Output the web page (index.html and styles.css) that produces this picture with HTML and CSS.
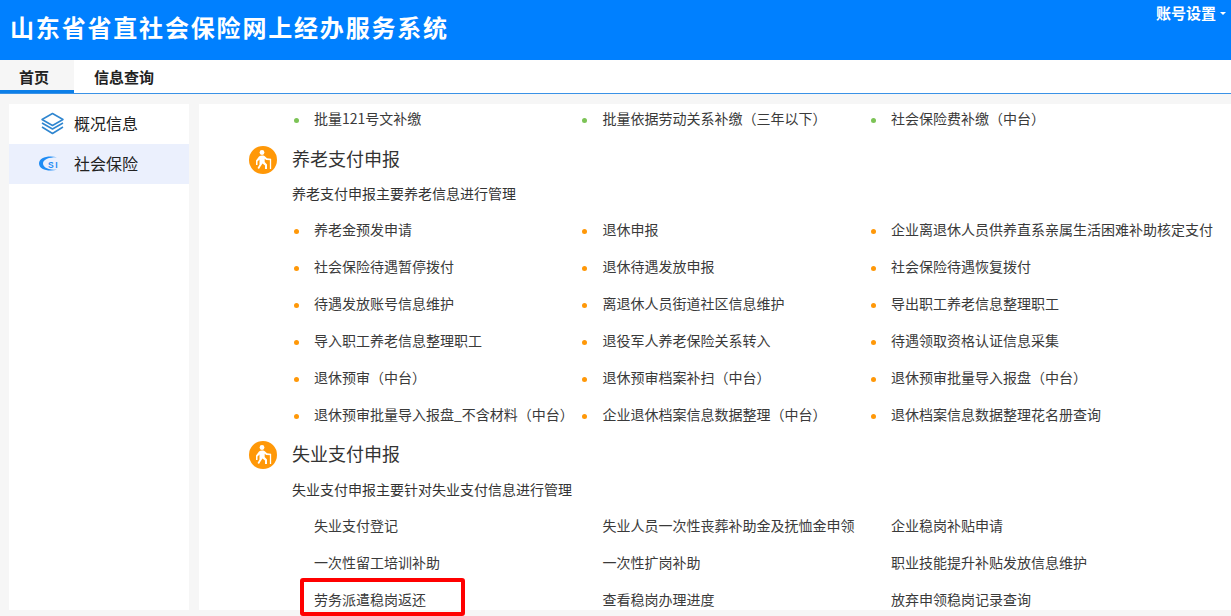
FILE: index.html
```html
<!DOCTYPE html>
<html lang="zh-CN">
<head>
<meta charset="utf-8">
<title>山东省省直社会保险网上经办服务系统</title>
<link rel="stylesheet" href="styles.css">
</head>
<body>
<header class="topbar">
  <h1 class="title">山东省省直社会保险网上经办服务系统</h1>
  <div class="account">账号设置<span class="caret"></span></div>
</header>
<nav class="tabs">
  <a class="tab tab-active">首页</a>
  <a class="tab">信息查询</a>
</nav>
<div class="layout">
  <aside class="sidebar">
    <div class="side-item">
      <svg class="side-icon" width="26" height="24" viewBox="0 0 26 24" fill="none" stroke="#2f86d0" stroke-width="1.5" stroke-linejoin="round">
        <path d="M13.500 1.500 24 7.500 13.500 13.500 3 7.500Z"/>
        <path d="M3 11 13.500 17 24 11"/>
        <path d="M3 15 13.500 21.500 24 15"/>
      </svg>
      <span class="side-label">概况信息</span>
    </div>
    <div class="side-item side-active">
      <svg class="side-icon" width="26" height="24" viewBox="0 0 26 24">
        <path d="M18 5.200C9 3 0 5.500 0 11.500S9 20 18 17.800C11 18 4 16 4 11.500S11 5 18 5.200Z" fill="#1e8cf5"/>
        <text class="si-text" x="9" y="16">SI</text>
      </svg>
      <span class="side-label">社会保险</span>
    </div>
  </aside>
  <main class="content">
    <ul class="links links-green">
      <li>批量121号文补缴</li>
      <li>批量依据劳动关系补缴（三年以下）</li>
      <li>社会保险费补缴（中台）</li>
    </ul>
    <section class="group">
      <div class="group-head">
        <svg class="group-icon" width="28" height="28" viewBox="0 0 28 28">
          <circle cx="14" cy="14" r="14" fill="#ff9808"/>
          <circle cx="13" cy="6.500" r="2.400" fill="#fff"/>
          <path d="M10 10.500C11.500 9.300 14 9.300 15.500 10L18 12.300 22 12.800V14.300L17.200 14 15.700 12.800V16L18 18.500V23H16V19.500L13.500 17.500 11.500 20.500 10 23 8.500 22 10.500 18.500V13.500L8.500 15.500V19H7V14.500Z" fill="#fff"/>
          <path d="M21.500 13v10" stroke="#fff" stroke-width="1.300" fill="none"/>
        </svg>
        <h2>养老支付申报</h2>
      </div>
      <p class="group-desc">养老支付申报主要养老信息进行管理</p>
      <ul class="links links-orange">
        <li>养老金预发申请</li>
        <li>退休申报</li>
        <li>企业离退休人员供养直系亲属生活困难补助核定支付</li>
        <li>社会保险待遇暂停拨付</li>
        <li>退休待遇发放申报</li>
        <li>社会保险待遇恢复拨付</li>
        <li>待遇发放账号信息维护</li>
        <li>离退休人员街道社区信息维护</li>
        <li>导出职工养老信息整理职工</li>
        <li>导入职工养老信息整理职工</li>
        <li>退役军人养老保险关系转入</li>
        <li>待遇领取资格认证信息采集</li>
        <li>退休预审（中台）</li>
        <li>退休预审档案补扫（中台）</li>
        <li>退休预审批量导入报盘（中台）</li>
        <li>退休预审批量导入报盘_不含材料（中台）</li>
        <li>企业退休档案信息数据整理（中台）</li>
        <li>退休档案信息数据整理花名册查询</li>
      </ul>
    </section>
    <section class="group">
      <div class="group-head">
        <svg class="group-icon" width="28" height="28" viewBox="0 0 28 28">
          <circle cx="14" cy="14" r="14" fill="#ff9808"/>
          <circle cx="13" cy="6.500" r="2.400" fill="#fff"/>
          <path d="M10 10.500C11.500 9.300 14 9.300 15.500 10L18 12.300 22 12.800V14.300L17.200 14 15.700 12.800V16L18 18.500V23H16V19.500L13.500 17.500 11.500 20.500 10 23 8.500 22 10.500 18.500V13.500L8.500 15.500V19H7V14.500Z" fill="#fff"/>
          <path d="M21.500 13v10" stroke="#fff" stroke-width="1.300" fill="none"/>
        </svg>
        <h2>失业支付申报</h2>
      </div>
      <p class="group-desc">失业支付申报主要针对失业支付信息进行管理</p>
      <ul class="links">
        <li>失业支付登记</li>
        <li>失业人员一次性丧葬补助金及抚恤金申领</li>
        <li>企业稳岗补贴申请</li>
        <li>一次性留工培训补助</li>
        <li>一次性扩岗补助</li>
        <li>职业技能提升补贴发放信息维护</li>
        <li>劳务派遣稳岗返还</li>
        <li>查看稳岗办理进度</li>
        <li>放弃申领稳岗记录查询</li>
      </ul>
    </section>
  </main>
</div>
<div class="highlight"></div>
</body>
</html>
```

FILE: styles.css
```css
* { box-sizing: border-box; }
html, body { margin: 0; padding: 0; height: 616px; overflow: hidden; }
body {
  background: #f6f6f6;
  font-family: "Noto Sans CJK SC", "Liberation Sans", sans-serif;
  color: #333;
  font-size: 14px;
  position: relative;
}
.topbar {
  height: 60px;
  background: #0080ff;
  display: flex;
  justify-content: space-between;
  align-items: flex-start;
  color: #fff;
}
.title {
  margin: 0;
  padding-left: 10px;
  font-size: 24px;
  line-height: 53px;
  font-weight: 700;
  letter-spacing: 1.82px;
}
.account {
  padding-right: 5px;
  font-size: 15px;
  line-height: 26px;
  font-weight: 700;
  display: flex;
  align-items: center;
  gap: 4px;
}
.caret {
  width: 0;
  height: 0;
  border-left: 3px solid transparent;
  border-right: 3px solid transparent;
  border-top: 3px solid #fff;
}
.tabs {
  height: 34px;
  background: #fff;
  border-bottom: 1px solid #3a92e6;
  display: flex;
}
.tab {
  width: 74px;
  height: 33px;
  padding-left: 19px;
  line-height: 34px;
  font-weight: 700;
  color: #222;
  font-size: 15px;
}
.tab + .tab { width: 98px; padding-left: 20px; }
.tab-active {
  background: #f6f6f6;
  border-bottom: 3px solid #0c7fe8;
}
.layout {
  display: flex;
  gap: 10px;
  padding: 10px 0 6px 9px;
  height: 522px;
}
.sidebar { width: 180px; background: #fff; flex: none; }
.side-item {
  height: 40px;
  display: flex;
  align-items: center;
  padding-left: 30px;
  gap: 9px;
  font-size: 16px;
  color: #222;
}
.side-label { line-height: 38px; margin-bottom: 2px; }
.side-icon { flex: none; }
.si-text {
  font-family: "Liberation Sans", sans-serif;
  font-size: 8.500px;
  font-weight: 700;
  letter-spacing: 1.500px;
  fill: #1e8cf5;
}
.side-active { background: #ebf0fd; }
.content {
  flex: 1;
  background: #fff;
  overflow: hidden;
  padding-left: 93px;
}
.links {
  list-style: none;
  margin: 0;
  padding: 0;
  display: grid;
  grid-template-columns: repeat(3, 288.500px);
}
.links li {
  height: 37px;
  line-height: 28px;
  padding-left: 22px;
  font-size: 14px;
  color: #3a3a3a;
  white-space: nowrap;
  position: relative;
}
.links-green li::before,
.links-orange li::before {
  content: "";
  position: absolute;
  left: 1.500px;
  top: 14px;
  width: 5px;
  height: 5px;
  border-radius: 50%;
}
.links-green li::before { background: #7cc356; }
.links-orange li::before { background: #ff9808; }
.group-head {
  display: flex;
  align-items: center;
  gap: 15px;
  margin-left: -43px;
  height: 28px;
}
.group-icon { flex: none; }
.group-head h2 {
  margin: 0 0 4px;
  font-size: 18px;
  line-height: 24px;
  font-weight: 400;
  color: #333;
}
.group-desc {
  margin: 10px 0 0;
  height: 31px;
  line-height: 18px;
  font-size: 14px;
  color: #333;
}
.group { margin-top: 5px; }
.group + .group { margin-top: 4px; }
.group + .group .group-desc { margin-top: 11px; }
.highlight {
  position: absolute;
  left: 300px;
  top: 578px;
  width: 165px;
  height: 38px;
  border: 4px solid #f00;
  border-radius: 3px;
}
```
